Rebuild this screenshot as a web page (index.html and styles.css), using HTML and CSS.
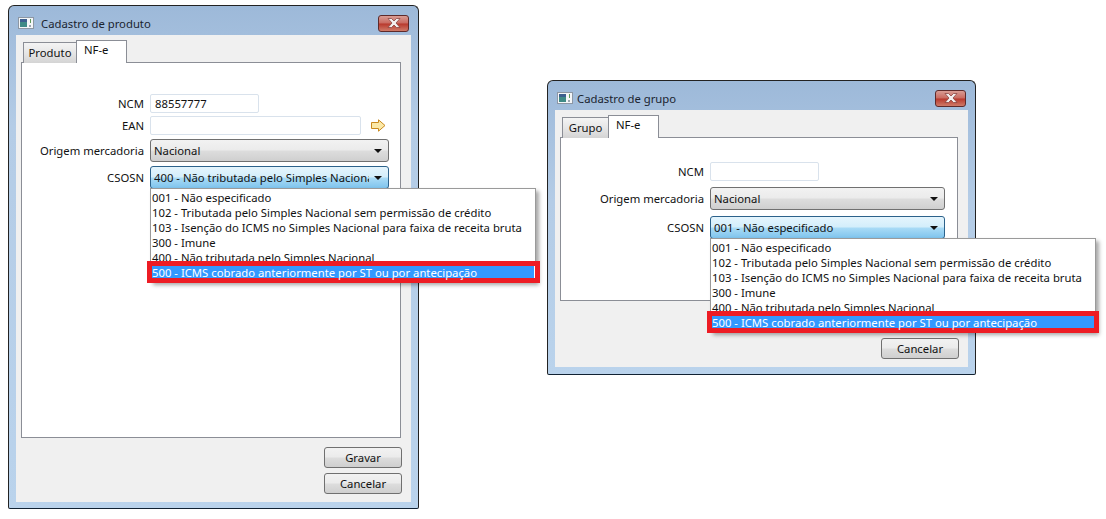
FILE: index.html
```html
<!DOCTYPE html>
<html lang="en">
<head>
    <meta charset="UTF-8">
    <title>Cadastro</title>
    <link rel="stylesheet" href="styles.css">
</head>
<body>

    <div class="window window-produto">
        <div class="titlebar">
            <svg class="app-icon" width="16" height="12" viewBox="0 0 16 12">
                <rect x="0.5" y="0.5" width="15" height="11" fill="#f4f6f8" stroke="#8d97a4"/>
                <rect x="2" y="2" width="7" height="8" fill="#3f8a86"/>
                <rect x="2" y="2" width="7" height="3" fill="#3d5f8f"/>
                <rect x="11" y="8" width="2" height="2" fill="#9aa5b0"/>
                <rect x="12" y="2" width="1" height="4" fill="#5f9a5a"/>
            </svg>
            <span class="title">Cadastro de produto</span>
            <button class="close-btn">
                <svg width="14" height="10" viewBox="0 0 14 10">
                    <path d="M1 0.5H4.5L7 3L9.5 0.5H13L9 5L13 9.5H9.5L7 7L4.5 9.5H1L5 5Z" fill="#f4f0f0" stroke="#7e3a36" stroke-width="0.7"/>
                </svg>
            </button>
        </div>
        <div class="client">
            <div class="tabs">
                <div class="tab tab-produto">Produto</div>
                <div class="tab tab-active">NF-e</div>
            </div>
            <div class="pane">
                <div class="form form-produto">
                    <label>NCM</label>
                    <div class="field"><input class="input input-short" value="88557777"></div>
                    <label>EAN</label>
                    <div class="field">
                        <input class="input input-long">
                        <svg class="go-arrow" width="15" height="13" viewBox="0 0 15 13">
                            <path d="M0.5 3.5H7.5V0.8L14 6.5L7.5 12.2V9.5H0.5Z" fill="#fbe9a8" stroke="#c98a1e"/>
                        </svg>
                    </div>
                    <label>Origem mercadoria</label>
                    <div class="field">
                        <div class="combo"><span class="combo-text">Nacional</span><i class="combo-arrow"></i></div>
                    </div>
                    <label>CSOSN</label>
                    <div class="field">
                        <div class="combo combo-open">
                            <span class="combo-text">400 - Não tributada pelo Simples Nacional</span><i class="combo-arrow"></i>
                            <ul class="menu">
                                <li>001 - Não especificado</li>
                                <li>102 - Tributada pelo Simples Nacional sem permissão de crédito</li>
                                <li>103 - Isenção do ICMS no Simples Nacional para faixa de receita bruta</li>
                                <li>300 - Imune</li>
                                <li>400 - Não tributada pelo Simples Nacional</li>
                                <li class="selected">500 - ICMS cobrado anteriormente por ST ou por antecipação</li>
                            </ul>
                        </div>
                    </div>
                </div>
            </div>
            <div class="actions">
                <button class="btn">Gravar</button>
                <button class="btn">Cancelar</button>
            </div>
        </div>
    </div>

    <div class="window window-grupo">
        <div class="titlebar">
            <svg class="app-icon" width="16" height="12" viewBox="0 0 16 12">
                <rect x="0.5" y="0.5" width="15" height="11" fill="#f4f6f8" stroke="#8d97a4"/>
                <rect x="2" y="2" width="7" height="8" fill="#3f8a86"/>
                <rect x="2" y="2" width="7" height="3" fill="#3d5f8f"/>
                <rect x="11" y="8" width="2" height="2" fill="#9aa5b0"/>
                <rect x="12" y="2" width="1" height="4" fill="#5f9a5a"/>
            </svg>
            <span class="title">Cadastro de grupo</span>
            <button class="close-btn">
                <svg width="14" height="10" viewBox="0 0 14 10">
                    <path d="M1 0.5H4.5L7 3L9.5 0.5H13L9 5L13 9.5H9.5L7 7L4.5 9.5H1L5 5Z" fill="#f4f0f0" stroke="#7e3a36" stroke-width="0.7"/>
                </svg>
            </button>
        </div>
        <div class="client">
            <div class="tabs">
                <div class="tab tab-grupo">Grupo</div>
                <div class="tab tab-active">NF-e</div>
            </div>
            <div class="pane">
                <div class="form form-grupo">
                    <label>NCM</label>
                    <div class="field"><input class="input input-short"></div>
                    <label>Origem mercadoria</label>
                    <div class="field">
                        <div class="combo"><span class="combo-text">Nacional</span><i class="combo-arrow"></i></div>
                    </div>
                    <label>CSOSN</label>
                    <div class="field">
                        <div class="combo combo-open">
                            <span class="combo-text">001 - Não especificado</span><i class="combo-arrow"></i>
                            <ul class="menu">
                                <li>001 - Não especificado</li>
                                <li>102 - Tributada pelo Simples Nacional sem permissão de crédito</li>
                                <li>103 - Isenção do ICMS no Simples Nacional para faixa de receita bruta</li>
                                <li>300 - Imune</li>
                                <li>400 - Não tributada pelo Simples Nacional</li>
                                <li class="selected">500 - ICMS cobrado anteriormente por ST ou por antecipação</li>
                            </ul>
                        </div>
                    </div>
                </div>
            </div>
            <div class="actions">
                <button class="btn">Cancelar</button>
            </div>
        </div>
    </div>

</body>
</html>
```

FILE: styles.css
```css
body {
    margin: 0;
    height: 519px;
    overflow: hidden;
    background-color: white;
    font-family: "Noto Sans", sans-serif;
    font-size: 11.3px;
    color: #111;
}
.window {
    position: absolute;
    box-sizing: border-box;
    display: flex;
    flex-direction: column;
    padding: 0 7px 6px 7px;
    border: 1px solid #222;
    border-bottom-color: #123;
    border-radius: 6px 6px 2px 2px;
    background: linear-gradient(#9db9d9, #b4cce6 120px, #bad3ec);
}
.window-produto {
    left: 8px;
    top: 5px;
    width: 411px;
    height: 504px;
}
.window-grupo {
    left: 547px;
    top: 80px;
    width: 429px;
    height: 295px;
    padding-bottom: 7px;
}
.titlebar {
    box-sizing: border-box;
    display: flex;
    align-items: center;
    height: 29px;
    padding-top: 5px;
    flex-shrink: 0;
}
.app-icon {
    margin-left: 2px;
}
.title {
    flex: 1;
    color: #1a2430;
}
.window-produto .title { margin-left: 7px; }
.window-grupo .title { margin-left: 4px; }
.close-btn {
    display: flex;
    align-items: center;
    justify-content: center;
    box-sizing: border-box;
    width: 31px;
    height: 17px;
    margin-right: 2px;
    padding: 0;
    border: 1px solid #5e2a2a;
    border-radius: 3px;
    background: linear-gradient(#d99c94, #c9695f 48%, #b8382c 52%, #cf7a68);
}
.client {
    flex: 1;
    display: flex;
    flex-direction: column;
    padding: 5px 10px 8px 5px;
    background-color: #f0f0f0;
}
.tabs {
    display: flex;
    height: 23px;
    margin-bottom: -1px;
    padding-left: 2px;
    position: relative;
    z-index: 1;
}
.tab {
    box-sizing: border-box;
    align-self: flex-end;
    height: 21px;
    line-height: 20px;
    text-align: center;
    border: 1px solid #8b8e96;
    border-bottom: none;
    background: linear-gradient(#f4f4f4, #e6e6e6 50%, #d4d4d4);
}
.tab-produto { width: 54px; }
.tab-grupo { width: 47px; }
.tab-active {
    width: 51px;
    height: 23px;
    margin-left: -1px;
    padding-left: 7px;
    line-height: 18px;
    text-align: left;
    background: white;
}
.pane {
    flex: 1;
    border: 1px solid #8b8e96;
    background-color: white;
}
.form {
    display: grid;
    grid-template-columns: 122px 1fr;
    column-gap: 6px;
    align-items: center;
}
.form-produto {
    padding-top: 31px;
    row-gap: 3px;
}
.form-produto .combo {
    margin-top: 1px;
}
.form-grupo {
    padding-top: 24px;
    grid-template-columns: 143px 1fr;
    row-gap: 6px;
}
.form label {
    text-align: right;
}
.field {
    display: flex;
    align-items: center;
}
.input {
    box-sizing: border-box;
    height: 19px;
    padding: 0 4px;
    border: 1px solid #d9e2ec;
    border-radius: 2px;
    background: white;
    font: inherit;
    color: inherit;
    outline: none;
}
.input-short { width: 109px; }
.input-long { width: 211px; }
.go-arrow {
    margin-left: 10px;
}
.combo {
    position: relative;
    box-sizing: border-box;
    display: flex;
    align-items: center;
    width: 239px;
    height: 23px;
    padding: 0 3px;
    border: 1px solid #707070;
    border-radius: 3px;
    background: linear-gradient(#f2f2f2, #ebebeb 48%, #dddddd 52%, #cfcfcf);
}
.form-grupo .combo { width: 235px; }
.combo-open {
    border-color: #2c628b;
    background: linear-gradient(#e5f5fd, #d3eefb 48%, #a9dbf6 52%, #7fc4ed);
}
.combo-text {
    flex: 1;
    overflow: hidden;
    white-space: nowrap;
}
.combo-arrow {
    flex-shrink: 0;
    width: 0;
    height: 0;
    margin: 1px 3px 0 5px;
    border-left: 4px solid transparent;
    border-right: 4px solid transparent;
    border-top: 4px solid #111;
}
.menu {
    position: absolute;
    top: 100%;
    left: -1px;
    z-index: 2;
    box-sizing: border-box;
    width: 386px;
    margin: 0;
    padding: 1px;
    list-style: none;
    border: 1px solid #9a9a9a;
    background-color: white;
    box-shadow: 3px 3px 4px rgba(0, 0, 0, 0.35);
}
.menu li {
    height: 15px;
    line-height: 15px;
    white-space: nowrap;
}
.menu li.selected {
    position: relative;
    z-index: 0;
    background-color: #3399ff;
    color: white;
}
/* red marker sits between the row background and its text */
.menu li.selected::after {
    content: "";
    position: absolute;
    z-index: -1;
    top: -4px;
    left: -5px;
    right: -5px;
    bottom: -3px;
    border: 5px solid #ed1c24;
}
.window-produto .menu li.selected::after {
    right: -6px;
}
.actions {
    display: flex;
    flex-direction: column;
    align-items: flex-end;
    gap: 5px;
    margin-top: 9px;
}
.window-grupo .actions {
    margin-top: 37px;
}
.btn {
    box-sizing: border-box;
    width: 78px;
    height: 21px;
    margin-right: -1px;
    padding: 0;
    border: 1px solid #707070;
    border-radius: 3px;
    background: linear-gradient(#f2f2f2, #ebebeb 48%, #dddddd 52%, #cfcfcf);
    font: inherit;
    color: inherit;
}
```
